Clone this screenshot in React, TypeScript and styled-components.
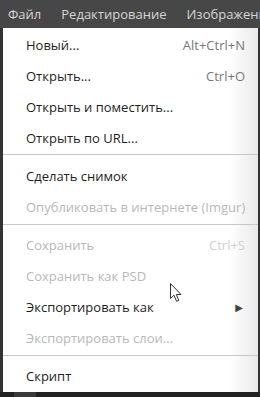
import React from "react";
import styled, { createGlobalStyle } from "styled-components";

const Global = createGlobalStyle`
  html, body { margin: 0; padding: 0; background: #2a2a2a; }
  body { font-family: "Open Sans", "DejaVu Sans", sans-serif; }
`;

const Page = styled.div`
  width: 260px;
  height: 397px;
  display: flex;
  flex-direction: column;
  overflow: hidden;
  background: #2a2a2a;
  position: relative;
`;

const TopBar = styled.div`
  height: 28px;
  flex: none;
  display: flex;
  align-items: center;
  background: #474747;
  padding-left: 8px;
  gap: 20px;
  white-space: nowrap;
  overflow: hidden;
`;

const TopItem = styled.span`
  color: #d6d6d6;
  font-size: 13px;
  line-height: 28px;
`;

const Middle = styled.div`
  flex: 1;
  display: flex;
  min-height: 0;
`;

const SideStrip = styled.div<{ $w: number }>`
  width: ${(p) => p.$w}px;
  flex: none;
  background: #333333;
`;

const Menu = styled.div`
  flex: 1;
  min-width: 0;
  display: flex;
  flex-direction: column;
  background: linear-gradient(to right, #ffffff 0%, #ffffff 89%, #e9e9e9 100%);
  padding-top: 1px;
`;

const Row = styled.div<{ $disabled?: boolean }>`
  height: 31.5px;
  display: flex;
  align-items: center;
  justify-content: space-between;
  padding: 0 13px 0 23px;
  font-size: 13px;
  white-space: nowrap;
  color: ${(p) => (p.$disabled ? "#b8b8b8" : "#1e1e1e")};
`;

const Shortcut = styled.span<{ $disabled?: boolean }>`
  color: ${(p) => (p.$disabled ? "#cfcfcf" : "#777777")};
`;

const Arrow = styled.span`
  color: #444;
  font-size: 10px;
  margin-right: 2px;
`;

const Separator = styled.div`
  height: 1px;
  background: #c8c8c8;
  margin: 1px 0 5px 0;
`;

const BottomBar = styled.div`
  height: 5px;
  flex: none;
  display: flex;
  background: #222222;
`;

const BottomTab = styled.div`
  width: 22px;
  margin-left: 14px;
  background: #3a3a3a;
`;

const Cursor = styled.svg`
  position: absolute;
  left: 170px;
  top: 283px;
`;

type Item = { label: string; shortcut?: string; disabled?: boolean; sub?: boolean } | "sep";

const items: Item[] = [
  { label: "Новый...", shortcut: "Alt+Ctrl+N" },
  { label: "Открыть...", shortcut: "Ctrl+O" },
  { label: "Открыть и поместить..." },
  { label: "Открыть по URL..." },
  "sep",
  { label: "Сделать снимок" },
  { label: "Опубликовать в интернете (Imgur)", disabled: true },
  "sep",
  { label: "Сохранить", shortcut: "Ctrl+S", disabled: true },
  { label: "Сохранить как PSD", disabled: true },
  { label: "Экспортировать как", sub: true },
  { label: "Экспортировать слои...", disabled: true },
  "sep",
  { label: "Скрипт" },
];

export default function App() {
  return (
    <>
      <Global />
      <Page>
        <TopBar>
          <TopItem>Файл</TopItem>
          <TopItem>Редактирование</TopItem>
          <TopItem>Изображение</TopItem>
        </TopBar>
        <Middle>
          <SideStrip $w={3} />
          <Menu>
            {items.map((it, i) =>
              it === "sep" ? (
                <Separator key={i} />
              ) : (
                <Row key={i} $disabled={it.disabled}>
                  <span>{it.label}</span>
                  {it.shortcut && <Shortcut $disabled={it.disabled}>{it.shortcut}</Shortcut>}
                  {it.sub && <Arrow>▶</Arrow>}
                </Row>
              )
            )}
          </Menu>
          <SideStrip $w={2} />
        </Middle>
        <BottomBar>
          <BottomTab />
        </BottomBar>
        <Cursor width="13" height="20" viewBox="0 0 13 20">
          <path
            d="M0.5 0.5 L0.5 15.5 L4 12.2 L6.6 18.3 L8.8 17.4 L6.3 11.5 L11 11.5 Z"
            fill="#ffffff"
            stroke="#333333"
            strokeWidth="1"
            strokeLinejoin="miter"
          />
        </Cursor>
      </Page>
    </>
  );
}
